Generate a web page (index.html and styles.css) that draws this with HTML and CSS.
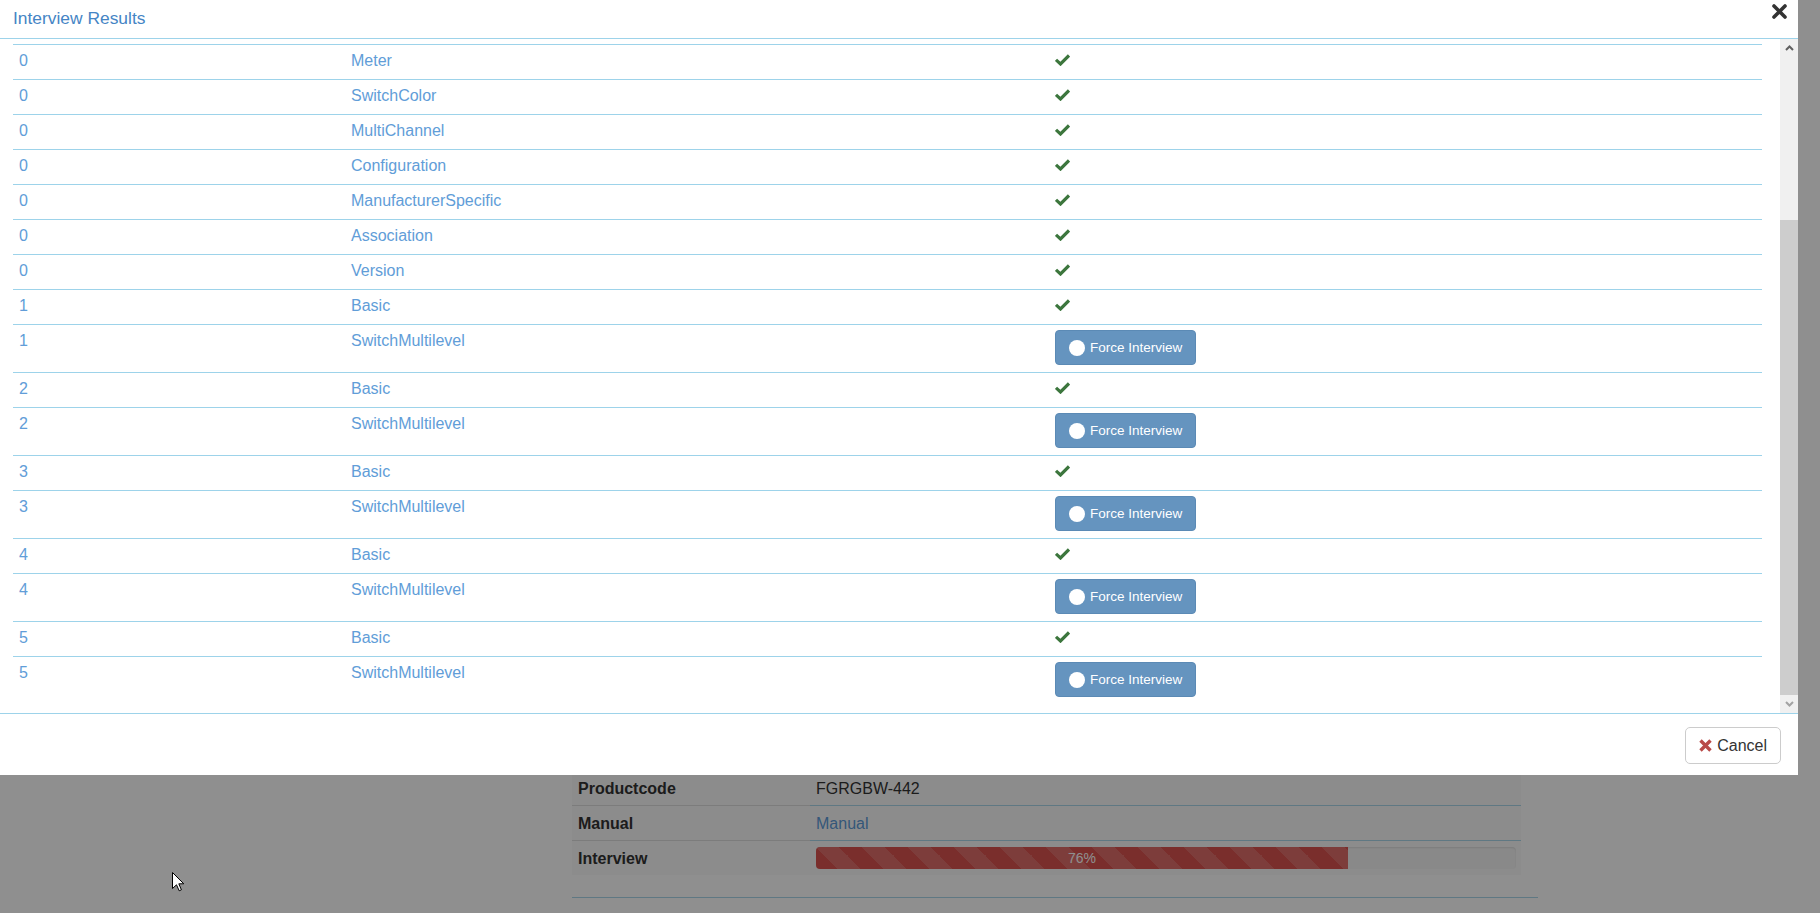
FILE: index.html
```html
<!DOCTYPE html>
<html>
<head>
  <link rel="stylesheet" href="styles.css">
</head>
<body>
  <div class="page">
    <table class="device-info">
      <tr>
        <th>Productcode</th>
        <td>FGRGBW-442</td>
      </tr>
      <tr>
        <th>Manual</th>
        <td><a href="#">Manual</a></td>
      </tr>
      <tr>
        <th>Interview</th>
        <td>
          <div class="progress">
            <div class="progress-bar" style="width: 76%">76%</div>
          </div>
        </td>
      </tr>
    </table>
    <div class="page-rule"></div>
  </div>

  <div class="backdrop"></div>

  <div class="modal">
    <div class="modal-header">
      <span class="modal-title">Interview Results</span>
      <svg class="close" width="15" height="15" viewBox="0 0 15 15">
        <path d="M2 2 L13 13 M13 2 L2 13" stroke="#333" stroke-width="3.6" stroke-linecap="round"/>
      </svg>
    </div>

    <div class="modal-main">
      <div class="modal-body">
        <table class="results">
          <colgroup>
            <col class="col-instance">
            <col class="col-class">
            <col>
          </colgroup>
          <tr><td>0</td><td>Meter</td><td><svg class="ok" width="15" height="12" viewBox="0 0 15 12"><path d="M1 5.8 L5.5 10 L14 1.5" fill="none" stroke="#3c763d" stroke-width="3.2"/></svg></td></tr>
          <tr><td>0</td><td>SwitchColor</td><td><svg class="ok" width="15" height="12" viewBox="0 0 15 12"><path d="M1 5.8 L5.5 10 L14 1.5" fill="none" stroke="#3c763d" stroke-width="3.2"/></svg></td></tr>
          <tr><td>0</td><td>MultiChannel</td><td><svg class="ok" width="15" height="12" viewBox="0 0 15 12"><path d="M1 5.8 L5.5 10 L14 1.5" fill="none" stroke="#3c763d" stroke-width="3.2"/></svg></td></tr>
          <tr><td>0</td><td>Configuration</td><td><svg class="ok" width="15" height="12" viewBox="0 0 15 12"><path d="M1 5.8 L5.5 10 L14 1.5" fill="none" stroke="#3c763d" stroke-width="3.2"/></svg></td></tr>
          <tr><td>0</td><td>ManufacturerSpecific</td><td><svg class="ok" width="15" height="12" viewBox="0 0 15 12"><path d="M1 5.8 L5.5 10 L14 1.5" fill="none" stroke="#3c763d" stroke-width="3.2"/></svg></td></tr>
          <tr><td>0</td><td>Association</td><td><svg class="ok" width="15" height="12" viewBox="0 0 15 12"><path d="M1 5.8 L5.5 10 L14 1.5" fill="none" stroke="#3c763d" stroke-width="3.2"/></svg></td></tr>
          <tr><td>0</td><td>Version</td><td><svg class="ok" width="15" height="12" viewBox="0 0 15 12"><path d="M1 5.8 L5.5 10 L14 1.5" fill="none" stroke="#3c763d" stroke-width="3.2"/></svg></td></tr>
          <tr><td>1</td><td>Basic</td><td><svg class="ok" width="15" height="12" viewBox="0 0 15 12"><path d="M1 5.8 L5.5 10 L14 1.5" fill="none" stroke="#3c763d" stroke-width="3.2"/></svg></td></tr>
          <tr><td>1</td><td>SwitchMultilevel</td><td><button class="btn-force"><span class="dot"></span>Force Interview</button></td></tr>
          <tr><td>2</td><td>Basic</td><td><svg class="ok" width="15" height="12" viewBox="0 0 15 12"><path d="M1 5.8 L5.5 10 L14 1.5" fill="none" stroke="#3c763d" stroke-width="3.2"/></svg></td></tr>
          <tr><td>2</td><td>SwitchMultilevel</td><td><button class="btn-force"><span class="dot"></span>Force Interview</button></td></tr>
          <tr><td>3</td><td>Basic</td><td><svg class="ok" width="15" height="12" viewBox="0 0 15 12"><path d="M1 5.8 L5.5 10 L14 1.5" fill="none" stroke="#3c763d" stroke-width="3.2"/></svg></td></tr>
          <tr><td>3</td><td>SwitchMultilevel</td><td><button class="btn-force"><span class="dot"></span>Force Interview</button></td></tr>
          <tr><td>4</td><td>Basic</td><td><svg class="ok" width="15" height="12" viewBox="0 0 15 12"><path d="M1 5.8 L5.5 10 L14 1.5" fill="none" stroke="#3c763d" stroke-width="3.2"/></svg></td></tr>
          <tr><td>4</td><td>SwitchMultilevel</td><td><button class="btn-force"><span class="dot"></span>Force Interview</button></td></tr>
          <tr><td>5</td><td>Basic</td><td><svg class="ok" width="15" height="12" viewBox="0 0 15 12"><path d="M1 5.8 L5.5 10 L14 1.5" fill="none" stroke="#3c763d" stroke-width="3.2"/></svg></td></tr>
          <tr><td>5</td><td>SwitchMultilevel</td><td><button class="btn-force"><span class="dot"></span>Force Interview</button></td></tr>
        </table>
      </div>

      <div class="scrollbar">
        <div class="scroll-btn">
          <svg width="9" height="6" viewBox="0 0 9 6"><path d="M1 5 L4.5 1.5 L8 5" fill="none" stroke="#606060" stroke-width="2"/></svg>
        </div>
        <div class="scroll-track">
          <div class="scroll-thumb"></div>
        </div>
        <div class="scroll-btn">
          <svg width="9" height="6" viewBox="0 0 9 6"><path d="M1 1 L4.5 4.5 L8 1" fill="none" stroke="#a3a3a3" stroke-width="2"/></svg>
        </div>
      </div>
    </div>

    <div class="modal-footer">
      <button class="btn-cancel">
        <svg width="13" height="13" viewBox="0 0 13 13">
          <path d="M1.5 1.5 L11.5 11.5 M11.5 1.5 L1.5 11.5" stroke="#b94a48" stroke-width="3.4"/>
        </svg>
        Cancel
      </button>
    </div>
  </div>

  <svg class="cursor" width="13" height="20" viewBox="0 0 13 20">
    <path d="M0.5 0.5 L0.5 16.5 L4.5 12.8 L7.2 18.8 L9.4 17.8 L6.8 11.8 L11.8 11.8 Z" fill="#fff" stroke="#000" stroke-width="1"/>
  </svg>
</body>
</html>
```

FILE: styles.css
```css
* {
  box-sizing: border-box;
}

html, body {
  width: 1820px;
  height: 913px;
  overflow: hidden;
}

body {
  margin: 0;
  font-family: 'Liberation Sans', Arial, sans-serif;
  font-size: 16px;
  color: #333;
  background: #fff;
}

/* page behind the dialog */

.page {
  padding: 770px 0 0 572px;
}

.device-info {
  width: 949px;
  border-collapse: collapse;
  background: #fafafa;
}

.device-info th,
.device-info td {
  padding: 6px 5px 5px 6px;
  line-height: 23px;
  text-align: left;
  vertical-align: top;
  border-top: 1px solid #a9d6ea;
}

.device-info th {
  width: 238px;
  font-weight: bold;
  border-top-color: #ddd;
}

.device-info a {
  color: #5d9bd8;
  text-decoration: none;
}

.progress {
  height: 22px;
  background: #f5f5f5;
  border-radius: 4px;
  box-shadow: inset 0 1px 2px rgba(0, 0, 0, 0.1);
  overflow: hidden;
}

.progress-bar {
  height: 100%;
  background-color: #d9534f;
  background-image: linear-gradient(45deg, rgba(255, 255, 255, 0.15) 25%, transparent 25%, transparent 50%, rgba(255, 255, 255, 0.15) 50%, rgba(255, 255, 255, 0.15) 75%, transparent 75%, transparent);
  background-size: 46px 46px;
  color: #fff;
  font-size: 14px;
  line-height: 22px;
  text-align: center;
}

.page-rule {
  width: 966px;
  margin-top: 22px;
  border-top: 1px solid #a9d6ea;
}

.backdrop {
  position: fixed;
  inset: 0;
  background: rgba(0, 0, 0, 0.44);
}

.cursor {
  position: fixed;
  left: 172px;
  top: 872px;
}

/* dialog */

.modal {
  position: fixed;
  top: 0;
  left: 0;
  width: 1798px;
  height: 775px;
  background: #fff;
  display: flex;
  flex-direction: column;
}

.modal-header {
  height: 39px;
  flex: none;
  display: flex;
  justify-content: space-between;
  align-items: flex-start;
  padding: 7px 11px 0 13px;
  border-bottom: 1px solid #9dd3ea;
}

.modal-title {
  font-size: 17.4px;
  line-height: 22px;
  color: #4585c5;
}

.close {
  margin-top: -3px;
}

.modal-main {
  flex: 1;
  display: flex;
  min-height: 0;
}

.modal-body {
  flex: 1;
  display: flex;
  flex-direction: column;
  justify-content: flex-end;
  overflow: hidden;
  padding: 0 18px 9px 13px;
}

.results {
  flex: none;
  width: 100%;
  table-layout: fixed;
  border-collapse: collapse;
}

.col-instance {
  width: 332px;
}

.col-class {
  width: 703px;
}

.results td {
  padding: 4px 7px 7px 6px;
  line-height: 23px;
  vertical-align: top;
  color: #619dd8;
  border-top: 1px solid #9dd3ea;
}

.ok {
  display: block;
  margin: 5px 0 0 1px;
}

.btn-force {
  display: inline-flex;
  align-items: center;
  gap: 5px;
  height: 35px;
  margin: 1px 0 0 1px;
  padding: 0 13px;
  vertical-align: top;
  font-family: inherit;
  font-size: 13.5px;
  color: #fff;
  background: #6594bf;
  border: 1px solid #5b8ab5;
  border-radius: 4px;
}

.btn-force .dot {
  width: 16px;
  height: 16px;
  border-radius: 50%;
  background: #fff;
}

.scrollbar {
  width: 18px;
  flex: none;
  display: flex;
  flex-direction: column;
  background: #f0f0f0;
}

.scroll-btn {
  height: 17px;
  flex: none;
  display: flex;
  align-items: center;
  justify-content: center;
}

.scroll-btn:last-child {
  height: 18px;
}

.scroll-track {
  flex: 1;
  display: flex;
  flex-direction: column;
  justify-content: flex-end;
}

.scroll-thumb {
  height: 475px;
  background: #cdcdcd;
}

.modal-footer {
  height: 62px;
  flex: none;
  display: flex;
  justify-content: flex-end;
  align-items: flex-start;
  padding: 13px 17px 0 0;
  border-top: 1px solid #9dd3ea;
}

.btn-cancel {
  display: inline-flex;
  align-items: center;
  gap: 5px;
  height: 37px;
  padding: 0 13px;
  font-family: inherit;
  font-size: 16px;
  color: #333;
  background: #fff;
  border: 1px solid #ccc;
  border-radius: 5px;
}
```
